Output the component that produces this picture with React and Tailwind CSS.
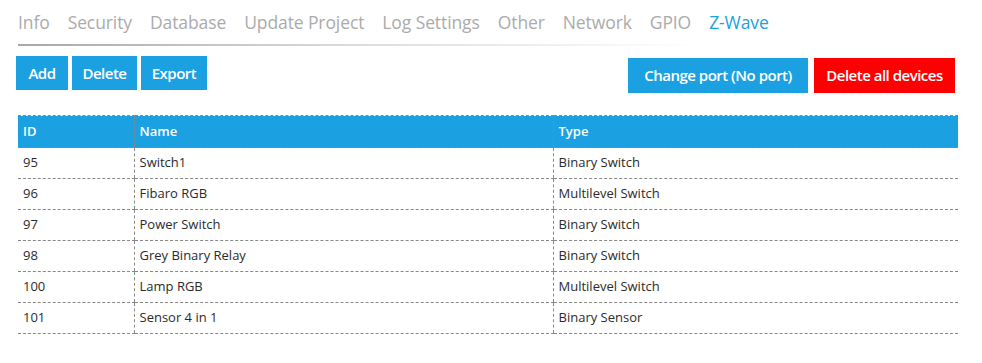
import React from "react";

const TABS = ["Info", "Security", "Database", "Update Project", "Log Settings", "Other", "Network", "GPIO", "Z-Wave"];

const DEVICES = [
  { id: 95, name: "Switch1", type: "Binary Switch" },
  { id: 96, name: "Fibaro RGB", type: "Multilevel Switch" },
  { id: 97, name: "Power Switch", type: "Binary Switch" },
  { id: 98, name: "Grey Binary Relay", type: "Binary Switch" },
  { id: 100, name: "Lamp RGB", type: "Multilevel Switch" },
  { id: 101, name: "Sensor 4 in 1", type: "Binary Sensor" },
];

const BUTTONS = [
  { label: "Add", w: "w-[52px]" },
  { label: "Delete", w: "w-[65px]" },
  { label: "Export", w: "w-[66px]" },
];

const font = { fontFamily: "'Open Sans', 'Noto Sans', sans-serif" };

const App = () => {
  return (
    <div className="w-[982px] h-[363px] bg-white overflow-hidden" style={font}>
      <div className="pl-[18px] pr-[24px]">
        {/* tabs */}
        <div className="flex gap-[18px] pt-[9px] text-[17.5px] leading-[26px] tracking-[-0.1px]">
          {TABS.map((t) => (
            <span key={t} className={t === "Z-Wave" ? "text-[#1ba1e2]" : "text-[#ababab]"}>
              {t}
            </span>
          ))}
        </div>
        <div className="mt-[9px] h-[2px] w-[680px] bg-gradient-to-r from-[#a8a8a8] via-[#dcdcdc] to-transparent" />

        {/* actions */}
        <div className="flex justify-between mt-[10px] -ml-[2px] pr-[3px]">
          <div className="flex gap-[4px]">
            {BUTTONS.map((b) => (
              <button
                key={b.label}
                className={`${b.w} h-[34px] bg-[#1ba1e2] text-white text-[15px] font-semibold tracking-[-0.5px]`}
              >
                {b.label}
              </button>
            ))}
          </div>
          <div className="flex gap-[6px] mt-[2px]">
            <button className="h-[35px] w-[180px] bg-[#1ba1e2] text-white text-[15px] font-semibold tracking-[-0.5px]">
              Change port (No port)
            </button>
            <button className="h-[35px] w-[141px] bg-[#ff0000] text-white text-[15px] font-semibold tracking-[-0.5px]">
              Delete all devices
            </button>
          </div>
        </div>

        {/* devices table */}
        <table className="mt-[22px] w-[940px] border-collapse text-[13px] text-[#2b2b2b]">
          <thead>
            <tr className="bg-[#1ba1e2] text-white h-[32px]">
              <th className="w-[116px] text-left font-semibold pl-[5px] border-t border-b border-dashed border-[#888]">ID</th>
              <th className="w-[419px] text-left font-semibold pl-[5px] border-t border-b border-l border-dashed border-[#888]">Name</th>
              <th className="text-left font-semibold pl-[5px] border-t border-b border-l border-dashed border-[#888]">Type</th>
            </tr>
          </thead>
          <tbody>
            {DEVICES.map((d) => (
              <tr key={d.id} className="h-[31px]">
                <td className="pl-[5px] border-b border-dashed border-[#888]">{d.id}</td>
                <td className="pl-[5px] border-b border-l border-dashed border-[#888]">{d.name}</td>
                <td className="pl-[5px] border-b border-l border-dashed border-[#888]">{d.type}</td>
              </tr>
            ))}
          </tbody>
        </table>
      </div>
    </div>
  );
};

export default App;
